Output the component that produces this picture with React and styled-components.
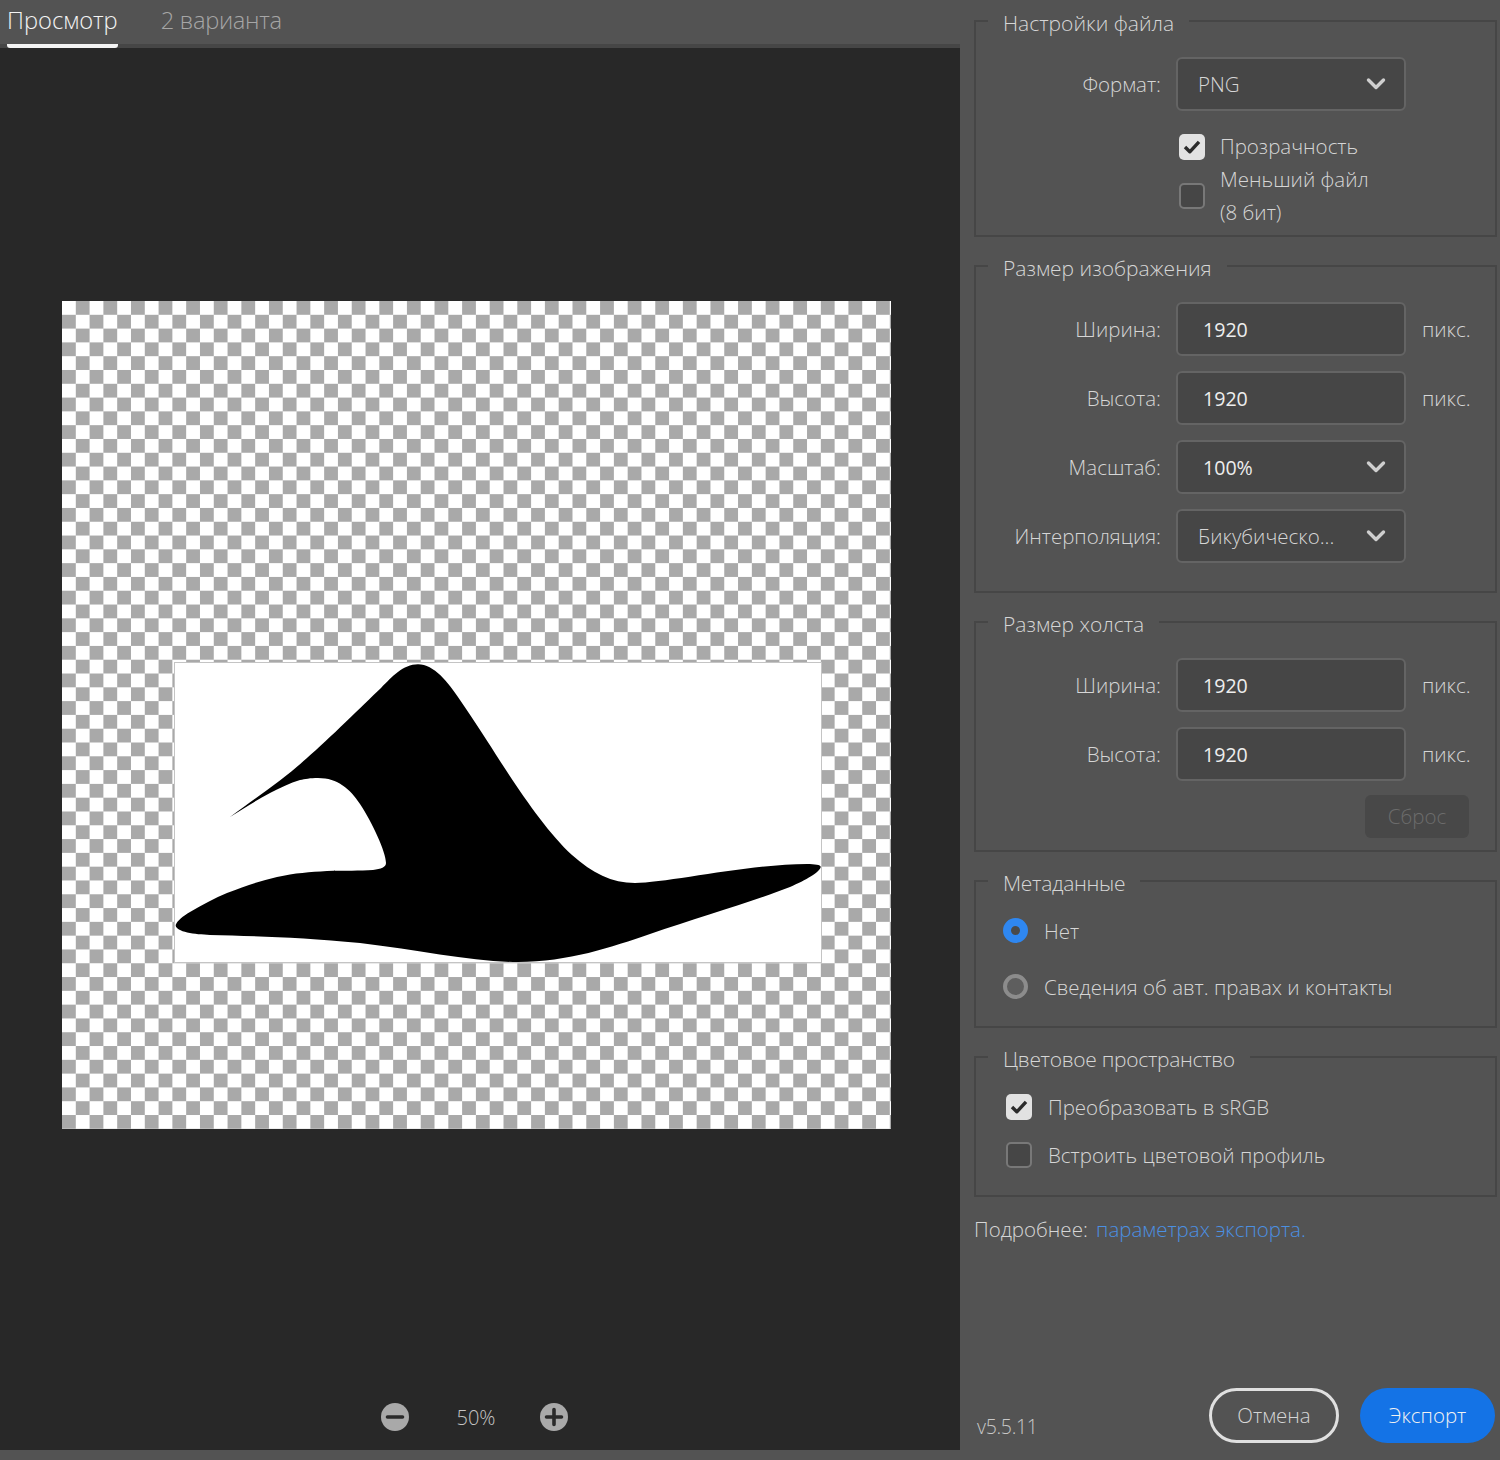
import React from 'react';
import styled, { createGlobalStyle } from 'styled-components';

const HAT = `M230 817 C260 795 285 778 306.7 758.3 C330 738 362 706 381 688 C392 677 403 664.3 418 664.3
C434 664.3 448 682 460 700 C475 722 490 745 500 761 C522 795 548 833 572 855 C592 873 612 883 635 883
C667 883 750 864 807 864 C815 864 821 865 820.7 867 C820 872 806 880 790 887 C760 899 700 917 650 934
C612 947 568 962 518 962 C472 962 420 950 360 943 C300 937 250 936 210 935 C195 934.5 175 932 175.7 925
C177 921 183 916 190 912 C202 905 215 898 227 893 C245 886 260 881 277 877 C295 873 310 872 327 871
C345 870.5 360 871 373 870 C381 869 386 867 386 863 C386 852 372 822 360 804 C350 789 338 778 318 778
C310 778 305 779 300 780 C290 783 280 788 270 793 C255 801 243 809 230 817 Z`;

function Chevron() {
    return (
        <ChevronIcon width="20" height="14" viewBox="0 0 20 14">
            <path d="M2.5 3 L10 10.5 L17.5 3" fill="none" stroke="#cfcfcf" strokeWidth="3.4" strokeLinecap="round" strokeLinejoin="round" />
        </ChevronIcon>
    );
}

function Checkbox({ checked }) {
    return (
        <CheckBox $checked={checked}>
            {checked && (
                <svg width="18" height="16" viewBox="0 0 18 16">
                    <path d="M2 8 L6.8 12.8 L16 2.8" fill="none" stroke="#2b2b2b" strokeWidth="3.4" strokeLinejoin="round" />
                </svg>
            )}
        </CheckBox>
    );
}

function App() {
    return (
        <Page>
            <GlobalStyle />
            <Left>
                <Tabs>
                    <Tab $active>Просмотр</Tab>
                    <Tab>2 варианта</Tab>
                </Tabs>
                <Preview>
                    <Checker>
                        <Artboard>
                            <svg width="646" height="299" viewBox="175 663 646 299" overflow="visible">
                                <path d={HAT} fill="#000" />
                            </svg>
                        </Artboard>
                    </Checker>
                    <ZoomBar>
                        <ZoomButton>
                            <svg width="28" height="28" viewBox="0 0 28 28">
                                <path d="M6.5 14 H21.5" stroke="#2a2a2a" strokeWidth="3.6" strokeLinecap="round" />
                            </svg>
                        </ZoomButton>
                        <ZoomValue>50%</ZoomValue>
                        <ZoomButton>
                            <svg width="28" height="28" viewBox="0 0 28 28">
                                <path d="M6.5 14 H21.5 M14 6.5 V21.5" stroke="#2a2a2a" strokeWidth="3.6" strokeLinecap="round" />
                            </svg>
                        </ZoomButton>
                    </ZoomBar>
                </Preview>
            </Left>

            <Panel>
                <Section $h={230}>
                    <Legend>Настройки файла</Legend>
                    <FormGrid>
                        <Label>Формат:</Label>
                        <Select>PNG<Chevron /></Select>
                    </FormGrid>
                    <CheckList>
                        <CheckRow>
                            <Checkbox checked />
                            <CheckText>Прозрачность</CheckText>
                        </CheckRow>
                        <CheckRow>
                            <Checkbox />
                            <CheckText>Меньший файл<br />(8 бит)</CheckText>
                        </CheckRow>
                    </CheckList>
                </Section>

                <Section $h={341}>
                    <Legend>Размер изображения</Legend>
                    <FormGrid>
                        <Label>Ширина:</Label>
                        <Input>1920</Input>
                        <Unit>пикс.</Unit>
                        <Label>Высота:</Label>
                        <Input>1920</Input>
                        <Unit>пикс.</Unit>
                        <Label>Масштаб:</Label>
                        <Select $value>100%<Chevron /></Select>
                        <span />
                        <Label>Интерполяция:</Label>
                        <Select>Бикубическо...<Chevron /></Select>
                    </FormGrid>
                </Section>

                <Section $h={244}>
                    <Legend>Размер холста</Legend>
                    <FormGrid>
                        <Label>Ширина:</Label>
                        <Input>1920</Input>
                        <Unit>пикс.</Unit>
                        <Label>Высота:</Label>
                        <Input>1920</Input>
                        <Unit>пикс.</Unit>
                    </FormGrid>
                    <ResetRow>
                        <ResetButton>Сброс</ResetButton>
                    </ResetRow>
                </Section>

                <Section $h={161}>
                    <Legend $tight>Метаданные</Legend>
                    <RadioList>
                        <RadioRow>
                            <Radio $on />
                            <RadioText>Нет</RadioText>
                        </RadioRow>
                        <RadioRow>
                            <Radio />
                            <RadioText>Сведения об авт. правах и контакты</RadioText>
                        </RadioRow>
                    </RadioList>
                </Section>

                <Section $h={154}>
                    <Legend $tight>Цветовое пространство</Legend>
                    <ColorList>
                        <ColorRow>
                            <Checkbox checked />
                            <CheckText>Преобразовать в sRGB</CheckText>
                        </ColorRow>
                        <ColorRow>
                            <Checkbox />
                            <CheckText>Встроить цветовой профиль</CheckText>
                        </ColorRow>
                    </ColorList>
                </Section>

                <MoreInfo>Подробнее: <MoreLink>параметрах экспорта.</MoreLink></MoreInfo>

                <Footer>
                    <Version>v5.5.11</Version>
                    <FooterButtons>
                        <CancelButton>Отмена</CancelButton>
                        <ExportButton>Экспорт</ExportButton>
                    </FooterButtons>
                </Footer>
            </Panel>
        </Page>
    );
}

const GlobalStyle = createGlobalStyle`
    html, body {
        margin: 0;
        padding: 0;
        background: #535353;
    }
    * {
        box-sizing: border-box;
    }
`;

const Page = styled.div`
    width: 1500px;
    height: 1460px;
    display: flex;
    background: #535353;
    color: #d6d6d6;
    font-family: "Open Sans", "Liberation Sans", sans-serif;
    font-weight: 300;
    font-size: 20.5px;
    overflow: hidden;
`;

const Left = styled.div`
    width: 960px;
    height: 1450px;
    display: flex;
    flex-direction: column;
`;

const Tabs = styled.div`
    height: 48px;
    flex: none;
    display: flex;
    gap: 43px;
    padding-left: 7px;
    border-bottom: 4px solid #464646;
`;

const Tab = styled.div`
    height: 48px;
    padding-top: 4px;
    line-height: 32px;
    font-size: 23.7px;
    letter-spacing: ${(p) => (p.$active ? '0' : '-0.3px')};
    color: ${(p) => (p.$active ? '#f4f4f4' : '#a6a6a6')};
    border-bottom: 4px solid ${(p) => (p.$active ? '#f4f4f4' : 'transparent')};
    border-radius: 0 0 3px 3px;
`;

const Preview = styled.div`
    flex: 1;
    display: flex;
    flex-direction: column;
    align-items: flex-start;
    background: #282828;
    padding: 253px 0 0 62px;
`;

const Checker = styled.div`
    position: relative;
    width: 829px;
    height: 828px;
    background: repeating-conic-gradient(#a9a9a9 0 25%, #ffffff 0 50%) 0 0 / 27.6px 27.6px;
`;

const Artboard = styled.div`
    position: absolute;
    left: 113px;
    top: 362px;
    width: 646px;
    height: 299px;
    background: #fff;
    outline: 1px solid #c4c4c4;
    line-height: 0;
`;

const ZoomBar = styled.div`
    width: 828px;
    margin-top: 274px;
    display: flex;
    align-items: center;
    justify-content: center;
    gap: 40px;
    padding-right: 4px;
`;

const ZoomButton = styled.div`
    width: 28px;
    height: 28px;
    border-radius: 50%;
    background: #a9a9a9;
    line-height: 0;
`;

const ZoomValue = styled.div`
    width: 51px;
    padding-left: 4px;
    text-align: center;
    font-size: 20px;
    white-space: nowrap;
    color: #c4c4c4;
`;

const Panel = styled.div`
    width: 540px;
    height: 1460px;
    padding: 7px 3px 0 14px;
    display: flex;
    flex-direction: column;
    gap: 15px;
`;

const Section = styled.fieldset`
    margin: 0;
    padding: 0;
    min-width: 0;
    height: ${(p) => p.$h}px;
    flex: none;
    border: 2px solid #464646;
`;

const Legend = styled.legend`
    margin-left: 12px;
    padding: 0 15px;
    height: 28px;
    line-height: 32px;
    font-size: 21px;
    letter-spacing: ${(p) => (p.$tight ? '-0.3px' : '0')};
    color: #d6d6d6;
`;

const FormGrid = styled.div`
    display: grid;
    grid-template-columns: 185px 230px auto;
    column-gap: 15px;
    row-gap: 15px;
    margin-top: 22px;
    align-items: center;
`;

const Label = styled.div`
    text-align: right;
    line-height: 54px;
    white-space: nowrap;
`;

const Field = styled.div`
    height: 54px;
    display: flex;
    align-items: center;
    background: #464646;
    border: 2px solid #646464;
    border-radius: 6px;
    white-space: nowrap;
`;

const Input = styled(Field)`
    padding-left: 25px;
    font-weight: 400;
    color: #eeeeee;
    font-size: 19.6px;
`;

const Select = styled(Field)`
    justify-content: space-between;
    padding: 0 18px 0 ${(p) => (p.$value ? '25px' : '20px')};
    font-weight: ${(p) => (p.$value ? 400 : 300)};
    color: ${(p) => (p.$value ? '#eeeeee' : '#d6d6d6')};
    font-size: ${(p) => (p.$value ? '19.6px' : '20.5px')};
`;

const ChevronIcon = styled.svg`
    flex: none;
`;

const Unit = styled.div`
    margin-left: 1px;
    white-space: nowrap;
`;

const CheckList = styled.div`
    margin: 19px 0 0 203px;
    display: flex;
    flex-direction: column;
`;

const CheckRow = styled.div`
    display: flex;
    align-items: center;
    gap: 15px;
`;

const CheckBox = styled.div`
    width: 26px;
    height: 26px;
    flex: none;
    display: flex;
    align-items: center;
    justify-content: center;
    border-radius: 5px;
    background: ${(p) => (p.$checked ? '#e2e2e2' : '#464646')};
    border: ${(p) => (p.$checked ? 'none' : '2px solid #787878')};
`;

const CheckText = styled.div`
    line-height: 33px;
`;

const ResetRow = styled.div`
    display: flex;
    justify-content: flex-end;
    margin: 14px 26px 0 0;
`;

const ResetButton = styled.div`
    width: 104px;
    height: 43px;
    line-height: 43px;
    text-align: center;
    background: #484848;
    border-radius: 6px;
    color: #6c6c6c;
`;

const RadioList = styled.div`
    margin: 23px 0 0 27px;
    display: flex;
    flex-direction: column;
    gap: 31px;
`;

const RadioRow = styled.div`
    display: flex;
    align-items: center;
    gap: 16px;
    height: 25px;
`;

const Radio = styled.div`
    width: 25px;
    height: 25px;
    flex: none;
    border-radius: 50%;
    background: ${(p) => (p.$on ? '#4a4a4a' : '#5e5e5e')};
    border: ${(p) => (p.$on ? '8.5px solid #2f87f0' : '4px solid #8c8c8c')};
`;

const RadioText = styled.div`
    white-space: nowrap;
`;

const ColorList = styled.div`
    margin: 23px 0 0 30px;
    display: flex;
    flex-direction: column;
    gap: 22px;
`;

const ColorRow = styled.div`
    display: flex;
    align-items: center;
    gap: 16px;
    height: 26px;
`;

const MoreInfo = styled.div`
    margin-top: -1px;
    line-height: 36px;
    white-space: nowrap;
`;

const MoreLink = styled.span`
    margin-left: 3px;
    color: #4b90e2;
`;

const Footer = styled.div`
    margin-top: auto;
    margin-bottom: 17px;
    display: flex;
    align-items: flex-end;
    justify-content: space-between;
    padding-left: 3px;
`;

const Version = styled.div`
    line-height: 32px;
    font-size: 19.5px;
    letter-spacing: -0.3px;
    color: #c8c8c8;
`;

const FooterButtons = styled.div`
    display: flex;
    gap: 21px;
    margin-right: 2px;
`;

const CancelButton = styled.div`
    width: 130px;
    height: 55px;
    line-height: 49px;
    text-align: center;
    border: 3px solid #e0e0e0;
    border-radius: 28px;
    color: #d6d6d6;
`;

const ExportButton = styled.div`
    width: 135px;
    height: 55px;
    line-height: 55px;
    text-align: center;
    border-radius: 28px;
    background: #1473e6;
    color: #f2f2f2;
`;

export default App;
